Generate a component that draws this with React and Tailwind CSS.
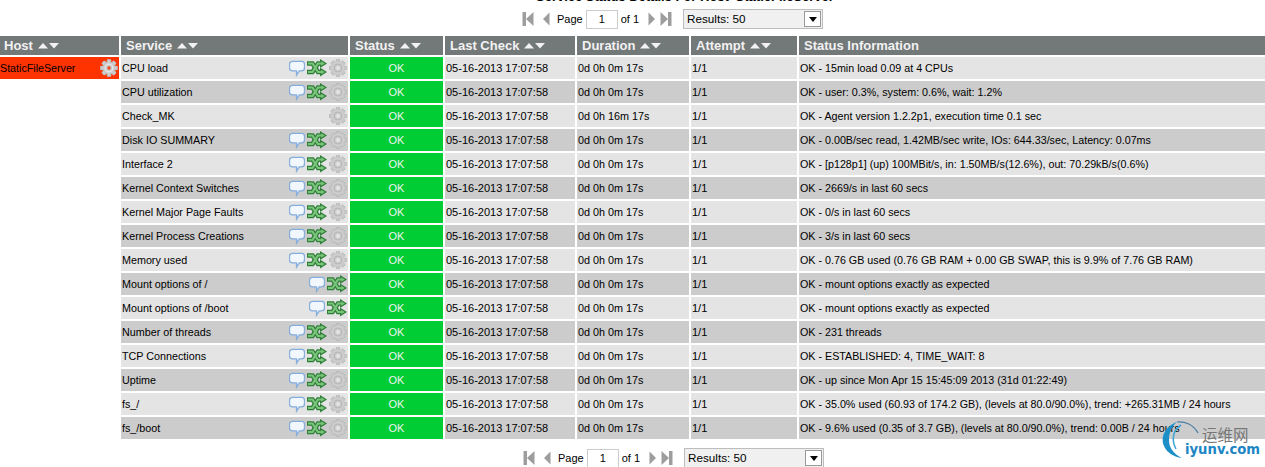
import React from 'react'

const columns = ['Host', 'Service', 'Status', 'Last Check', 'Duration', 'Attempt', 'Status Information']

const rows = [
  ['CPU load', '0d 0h 0m 17s', 'OK - 15min load 0.09 at 4 CPUs', 'all'],
  ['CPU utilization', '0d 0h 0m 17s', 'OK - user: 0.3%, system: 0.6%, wait: 1.2%', 'all'],
  ['Check_MK', '0d 0h 16m 17s', 'OK - Agent version 1.2.2p1, execution time 0.1 sec', 'gear'],
  ['Disk IO SUMMARY', '0d 0h 0m 17s', 'OK - 0.00B/sec read, 1.42MB/sec write, IOs: 644.33/sec, Latency: 0.07ms', 'all'],
  ['Interface 2', '0d 0h 0m 17s', 'OK - [p128p1] (up) 100MBit/s, in: 1.50MB/s(12.6%), out: 70.29kB/s(0.6%)', 'all'],
  ['Kernel Context Switches', '0d 0h 0m 17s', 'OK - 2669/s in last 60 secs', 'all'],
  ['Kernel Major Page Faults', '0d 0h 0m 17s', 'OK - 0/s in last 60 secs', 'all'],
  ['Kernel Process Creations', '0d 0h 0m 17s', 'OK - 3/s in last 60 secs', 'all'],
  ['Memory used', '0d 0h 0m 17s', 'OK - 0.76 GB used (0.76 GB RAM + 0.00 GB SWAP, this is 9.9% of 7.76 GB RAM)', 'all'],
  ['Mount options of /', '0d 0h 0m 17s', 'OK - mount options exactly as expected', 'nogear'],
  ['Mount options of /boot', '0d 0h 0m 17s', 'OK - mount options exactly as expected', 'nogear'],
  ['Number of threads', '0d 0h 0m 17s', 'OK - 231 threads', 'all'],
  ['TCP Connections', '0d 0h 0m 17s', 'OK - ESTABLISHED: 4, TIME_WAIT: 8', 'all'],
  ['Uptime', '0d 0h 0m 17s', 'OK - up since Mon Apr 15 15:45:09 2013 (31d 01:22:49)', 'all'],
  ['fs_/', '0d 0h 0m 17s', 'OK - 35.0% used (60.93 of 174.2 GB), (levels at 80.0/90.0%), trend: +265.31MB / 24 hours', 'all'],
  ['fs_/boot', '0d 0h 0m 17s', 'OK - 9.6% used (0.35 of 3.7 GB), (levels at 80.0/90.0%), trend: 0.00B / 24 hours', 'all'],
]

function Gear({ onRed }) {
  const teeth = [0, 45, 90, 135, 180, 225, 270, 315]
  return (
    <svg width="18" height="18" viewBox="0 0 19 19" className="shrink-0">
      {teeth.map((a) => (
        <rect key={a} x="7.5" y="0.5" width="4" height="18" rx="1" fill={onRed ? '#cbcbcb' : '#c8c8c8'} stroke="#b0b0b0" strokeWidth="0.4" transform={`rotate(${a} 9.5 9.5)`} />
      ))}
      <circle cx="9.5" cy="9.5" r="6.5" fill={onRed ? '#c9c9c9' : '#d0d0d0'} />
      <circle cx="9.5" cy="9.5" r="4" fill="none" stroke={onRed ? '#e8e8e8' : '#b6b6b6'} strokeWidth="1.4" />
      <circle cx="9.5" cy="9.5" r="1.800" fill={onRed ? '#ef4a20' : '#e4e4e4'} />
    </svg>
  )
}

function Bubble() {
  return (
    <svg width="16" height="17" viewBox="0 0 17 17" className="shrink-0">
      <path d="M3.500 1h10a3 3 0 0 1 3 3v4a3 3 0 0 1-3 3H11l-3 4.500v-4.500H3.500a3 3 0 0 1-3-3V4a3 3 0 0 1 3-3z" fill="#f2f7fd" stroke="#84aedd" strokeWidth="1.400" />
    </svg>
  )
}

function Shuffle() {
  return (
    <svg width="20" height="18" viewBox="0 0 20 18" className="shrink-0">
      <path d="M0 4.500h5.500l5.500 8.500h3" fill="none" stroke="#2f7d38" strokeWidth="4.600" />
      <path d="M0 13h5.500l5.500-8.500h3" fill="none" stroke="#2f7d38" strokeWidth="4.600" />
      <path d="M13 0l7 4.500-7 4.500zM13 8.500l7 4.500-7 4.500z" fill="#2f7d38" />
      <path d="M1 4.500h4.500l5.500 8.500h3.500" fill="none" stroke="#79c57b" strokeWidth="2.200" />
      <path d="M1 13h4.500l5.500-8.500h3.500" fill="none" stroke="#79c57b" strokeWidth="2.200" />
      <path d="M14.200 2.200l3.700 2.300-3.700 2.300zM14.200 10.700l3.700 2.300-3.700 2.300z" fill="#79c57b" />
    </svg>
  )
}

function SortArrows() {
  return (
    <svg width="21" height="7" viewBox="0 0 21 7" className="shrink-0">
      <path d="M0 6.500L5 1l5 5.500z" fill="#f2f2f2" />
      <path d="M11 1h10l-5 5.500z" fill="#f2f2f2" />
    </svg>
  )
}

function PagerIcon({ type }) {
  const c = '#9d9d9d'
  return (
    <svg width="12" height="16" viewBox="0 0 12 16" className="shrink-0">
      {type === 'first' && <path d="M0.500 1h3.500v14H0.500zM11.500 1v14L4 8z" fill={c} />}
      {type === 'prev' && <path d="M9.500 1.500v13L3 8z" fill={c} />}
      {type === 'next' && <path d="M2.500 1.500v13L9 8z" fill={c} />}
      {type === 'last' && <path d="M0.500 1v14L8 8zM8 1h3.500v14H8z" fill={c} />}
    </svg>
  )
}

function Pager({ className }) {
  return (
    <div className={`flex items-center h-[20px] text-[11px] text-black ${className}`}>
      <PagerIcon type="first" />
      <span className="ml-[6px]"><PagerIcon type="prev" /></span>
      <span className="ml-[5px]">Page</span>
      <span className="ml-[3px] w-[32px] h-[19px] border border-[#cccccc] bg-white flex items-center justify-center">1</span>
      <span className="ml-[3px]">of 1</span>
      <span className="ml-[7px]"><PagerIcon type="next" /></span>
      <span className="ml-[2px]"><PagerIcon type="last" /></span>
      <div className="ml-[11px] w-[140px] h-[20px] border border-[#bdbdbd] bg-[#f0f0f0] text-[11.7px] flex items-center justify-between pl-[3px] pr-[1px]">
        <span>Results: 50</span>
        <span className="w-[17px] h-[16px] bg-white border border-[#999999] flex items-center justify-center">
          <span className="w-0 h-0 border-x-[4px] border-x-transparent border-t-[5px] border-t-black"></span>
        </span>
      </div>
    </div>
  )
}

function Watermark() {
  return (
    <div className="absolute left-[1160px] top-[418px] w-[105px] h-[49px]">
      <svg width="42" height="44" viewBox="0 0 42 44" className="absolute left-0 top-0">
        <path d="M38 15C33 6 24 3 17 4" fill="none" stroke="#4b7fa8" strokeWidth="1.200" />
        <path d="M17 4C6 8 0 18 4 28C7 35 14 39 22 40C14 36 9 30 9 22C9 14 12 8 17 4z" fill="#1c8fc9" />
        <path d="M21 7C13 12 11 22 16 31" fill="none" stroke="#38a3d8" strokeWidth="1.500" />
      </svg>
      <span className="absolute left-[42px] top-[7px] text-[15.5px] leading-[18px] text-[#777777] font-['Noto_Sans_CJK_SC',sans-serif]">运维网</span>
      <span className="absolute left-[25px] top-[24px] text-[13.2px] leading-[16px] font-bold text-[#1c85c4] font-['DejaVu_Sans',sans-serif]">iyunv.com</span>
    </div>
  )
}

export default function App() {
  return (
    <div className="relative w-[1265px] h-[467px] overflow-hidden bg-white font-['Liberation_Sans',Arial,sans-serif] text-[11px] text-black">
      <div className="-mt-[10px] h-[13px] pl-[536px] text-[13px] leading-[13px] font-bold whitespace-nowrap">
        Service Status Details For Host 'StaticFileServer'
      </div>
      <Pager className="mt-[6px] ml-[522px]" />

      <div className="mt-[7px] grid grid-cols-[119px_227px_93px_130px_112px_106px_466px] grid-rows-[19px] auto-rows-[22px] gap-[2px]">
        {columns.map((col) => (
          <div key={col} className={`bg-[#737879] text-[#f2f2f2] text-[13px] font-bold flex items-center gap-[5px] whitespace-nowrap ${col === 'Host' ? 'pl-[4px]' : 'pl-[5px]'}`}>
            {col}
            {col !== 'Status Information' && <SortArrows />}
          </div>
        ))}

        {rows.map((row, i) => {
          const bg = i % 2 === 0 ? 'bg-[#e4e4e4]' : 'bg-[#cccccc]'
          const cell = `${bg} flex items-center pl-[1px] whitespace-nowrap`
          return (
            <React.Fragment key={row[0]}>
              {i === 0 ? (
                <div className="bg-[#ff3300] text-[10.7px] flex items-center justify-between pr-[1px]">
                  <span>StaticFileServer</span>
                  <Gear onRed />
                </div>
              ) : (
                <div></div>
              )}
              <div className={`${cell} text-[10.75px] justify-between pr-[1px]`}>
                <span>{row[0]}</span>
                <div className="flex items-center gap-[2px]">
                  {row[3] !== 'gear' && <Bubble />}
                  {row[3] !== 'gear' && <Shuffle />}
                  {row[3] !== 'nogear' && <Gear />}
                </div>
              </div>
              <div className="bg-[#00cc33] text-[#f2f2f2] flex items-center justify-center">OK</div>
              <div className={cell}>05-16-2013 17:07:58</div>
              <div className={`${cell} text-[10.8px]`}>{row[1]}</div>
              <div className={cell}>1/1</div>
              <div className={`${cell} text-[10.72px]`}>{row[2]}</div>
            </React.Fragment>
          )
        })}
      </div>

      <Pager className="mt-[9px] ml-[523px]" />
      <Watermark />
    </div>
  )
}
